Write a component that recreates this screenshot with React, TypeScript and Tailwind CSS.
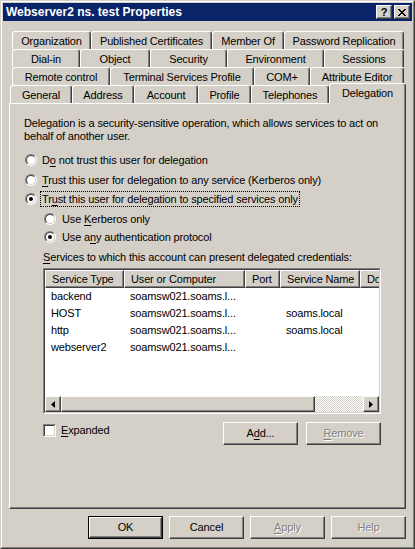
import React from 'react';

const rows: { label: string; w: string }[][] = [
  [
    { label: 'Organization', w: 'w-[79px]' },
    { label: 'Published Certificates', w: 'w-[121px]' },
    { label: 'Member Of', w: 'w-[72px]' },
    { label: 'Password Replication', w: 'w-[120px]' },
  ],
  [
    { label: 'Dial-in', w: 'w-[68px]' },
    { label: 'Object', w: 'w-[70px]' },
    { label: 'Security', w: 'w-[77px]' },
    { label: 'Environment', w: 'w-[97px]' },
    { label: 'Sessions', w: 'w-[80px]' },
  ],
  [
    { label: 'Remote control', w: 'w-[98px]' },
    { label: 'Terminal Services Profile', w: 'w-[144px]' },
    { label: 'COM+', w: 'w-[56px]' },
    { label: 'Attribute Editor', w: 'w-[94px]' },
  ],
];

const front = [
  { label: 'General', w: 'w-[62px]' },
  { label: 'Address', w: 'w-[62px]' },
  { label: 'Account', w: 'w-[64px]' },
  { label: 'Profile', w: 'w-[53px]' },
  { label: 'Telephones', w: 'w-[78px]' },
];

const services = [
  ['backend', 'soamsw021.soams.l...', ''],
  ['HOST', 'soamsw021.soams.l...', 'soams.local'],
  ['http', 'soamsw021.soams.l...', 'soams.local'],
  ['webserver2', 'soamsw021.soams.l...', ''],
];

const raised =
  'border border-t-white border-l-white border-r-[#404040] border-b-[#404040] shadow-[inset_-1px_-1px_0_#808080]';
const tab =
  'h-[18px] flex items-center justify-center pt-[1px] border-t border-l border-r border-t-white border-l-white border-r-[#404040] shadow-[inset_-1px_0_0_#808080] rounded-t-[3px] shrink-0';
const disabled = 'text-[#808080] [text-shadow:1px_1px_0_#ffffff]';

const U = ({ children }: { children: React.ReactNode }) => (
  <span className="underline decoration-1 underline-offset-[2px]">{children}</span>
);

const Radio = ({ checked }: { checked?: boolean }) => (
  <span className="relative block w-[12px] h-[12px] rounded-full border border-t-[#808080] border-l-[#808080] border-r-white border-b-white shrink-0">
    <span className="absolute inset-0 rounded-full border border-t-[#404040] border-l-[#404040] border-r-[#d4d0c8] border-b-[#d4d0c8] bg-white flex items-center justify-center">
      {checked && <span className="block w-[4px] h-[4px] rounded-full bg-black" />}
    </span>
  </span>
);

const Button = ({ children, off, def }: { children: React.ReactNode; off?: boolean; def?: boolean }) =>
  def ? (
    <div className="w-[75px] h-[23px] border border-black shrink-0">
      <div className={`w-full h-full flex items-center justify-center ${raised}`}>{children}</div>
    </div>
  ) : (
    <div className={`w-[75px] h-[23px] flex items-center justify-center shrink-0 ${raised} ${off ? disabled : ''}`}>
      {children}
    </div>
  );

const Arrow = ({ left }: { left?: boolean }) => (
  <div className={`w-[16px] h-[16px] flex items-center justify-center shrink-0 bg-[#d4d0c8] ${raised}`}>
    <svg width="4" height="7" viewBox="0 0 4 7">
      <path d={left ? 'M4 0 L0 3.5 L4 7 Z' : 'M0 0 L4 3.5 L0 7 Z'} fill="#000" />
    </svg>
  </div>
);

export default function App() {
  return (
    <div className="w-[415px] h-[549px] bg-[#d4d0c8] border border-t-[#d4d0c8] border-l-[#d4d0c8] border-r-[#404040] border-b-[#404040] text-[11px] leading-[13px] tracking-[-0.15px] text-black font-['Liberation_Sans',Arial,sans-serif]">
      <div className="w-full h-full border border-t-white border-l-white border-r-[#808080] border-b-[#808080] p-[1px] flex flex-col">
        {/* title bar */}
        <div className="h-[18px] bg-[#0a246a] flex items-center pl-[3px] shrink-0">
          <span className="text-white font-bold text-[12px] tracking-normal flex-1">Webserver2 ns. test Properties</span>
          <div className={`w-[16px] h-[14px] bg-[#d4d0c8] flex items-center justify-center font-bold text-[11px] leading-none ${raised}`}>?</div>
          <div className={`w-[16px] h-[14px] bg-[#d4d0c8] flex items-center justify-center ml-[2px] mr-[2px] ${raised}`}>
            <svg width="8" height="7" viewBox="0 0 8 7">
              <path d="M0 0h2v1h1v1h2v-1h1v-1h2v1h-1v1h-1v1h-1v1h1v1h1v1h1v1h-2v-1h-1v-1h-2v1h-1v1h-2v-1h1v-1h1v-1h1v-1h-1v-1h-1v-1h-1z" fill="#000" />
            </svg>
          </div>
        </div>

        {/* tabs */}
        <div className="mt-[10px] flex flex-col">
          {rows.map((row, i) => (
            <div key={i} className="flex ml-[9px]">
              {row.map((t) => (
                <div key={t.label} className={`${tab} ${t.w}`}>{t.label}</div>
              ))}
            </div>
          ))}
          <div className="flex items-end ml-[7px] h-[18px]">
            {front.map((t) => (
              <div key={t.label} className={`${tab} ${t.w}`}>{t.label}</div>
            ))}
            <div className="relative z-10 w-[77px] h-[21px] -mb-[1px] bg-[#d4d0c8] flex items-center justify-center pb-[2px] border-t border-l border-r border-t-white border-l-white border-r-[#404040] shadow-[inset_-1px_0_0_#808080] rounded-t-[3px] shrink-0">
              Delegation
            </div>
          </div>
        </div>

        {/* panel */}
        <div className="ml-[6px] w-[397px] h-[406px] border border-t-white border-l-white border-r-[#404040] border-b-[#404040] shadow-[inset_-1px_-1px_0_#808080] flex flex-col pl-[14px]">
          <p className="mt-[13px]">
            Delegation is a security-sensitive operation, which allows services to act on
            <br />
            behalf of another user.
          </p>

          <div className="mt-[9px] h-[16px] flex items-center ml-[1px] gap-[5px]">
            <Radio />
            <span>D<U>o</U> not trust this user for delegation</span>
          </div>
          <div className="mt-[4px] h-[16px] flex items-center ml-[1px] gap-[5px]">
            <Radio />
            <span><U>T</U>rust this user for delegation to any service (Kerberos only)</span>
          </div>
          <div className="mt-[3px] h-[16px] flex items-center ml-[1px] gap-[3px]">
            <Radio checked />
            <span className="h-[16px] flex items-center px-[1px] border border-dotted border-black">
              Tr<U>u</U>st this user for delegation to specified services only
            </span>
          </div>
          <div className="mt-[4px] h-[16px] flex items-center ml-[20px] gap-[6px]">
            <Radio />
            <span>Use <U>K</U>erberos only</span>
          </div>
          <div className="mt-[2px] h-[16px] flex items-center ml-[20px] gap-[6px]">
            <Radio checked />
            <span>Use a<U>n</U>y authentication protocol</span>
          </div>

          <div className="mt-[6px] ml-[19px]">
            <U>S</U>ervices to which this account can present delegated credentials:
          </div>

          {/* list view */}
          <div className="mt-[4px] ml-[19px] w-[338px] h-[146px] border border-t-[#808080] border-l-[#808080] border-r-white border-b-white">
            <div className="w-full h-full border border-t-[#404040] border-l-[#404040] border-r-[#d4d0c8] border-b-[#d4d0c8] bg-white flex flex-col overflow-hidden">
              <div className="flex h-[18px] shrink-0 bg-[#d4d0c8]">
                <div className={`w-[79px] shrink-0 flex items-center pl-[6px] ${raised}`}>Service Type</div>
                <div className={`w-[121px] shrink-0 flex items-center pl-[6px] ${raised}`}>User or Computer</div>
                <div className={`w-[35px] shrink-0 flex items-center pl-[6px] ${raised}`}>Port</div>
                <div className={`w-[80px] shrink-0 flex items-center pl-[6px] ${raised}`}>Service Name</div>
                <div className={`w-[80px] shrink-0 flex items-center pl-[6px] ${raised}`}>Domain</div>
              </div>
              {services.map((s) => (
                <div key={s[0]} className="flex h-[17px] items-center shrink-0">
                  <div className="w-[79px] pl-[6px] shrink-0">{s[0]}</div>
                  <div className="w-[121px] pl-[6px] shrink-0">{s[1]}</div>
                  <div className="w-[35px] shrink-0" />
                  <div className="w-[80px] pl-[6px] shrink-0">{s[2]}</div>
                </div>
              ))}
              <div className="mt-auto flex h-[16px] shrink-0">
                <Arrow left />
                <div className={`w-[254px] shrink-0 bg-[#d4d0c8] ${raised}`} />
                <div className="flex-1 [background:repeating-conic-gradient(#d4d0c8_0%_25%,#ffffff_0%_50%)_0_0/2px_2px]" />
                <Arrow />
              </div>
            </div>
          </div>

          <div className="mt-[8px] ml-[19px] w-[338px] flex items-start">
            <div className="mt-[2px] w-[13px] h-[13px] border border-t-[#808080] border-l-[#808080] border-r-white border-b-white shrink-0">
              <div className="w-full h-full border border-t-[#404040] border-l-[#404040] border-r-[#d4d0c8] border-b-[#d4d0c8] bg-white" />
            </div>
            <span className="ml-[5px] mt-[2px] flex-1"><U>E</U>xpanded</span>
            <div className="flex gap-[8px]">
              <Button>A<U>d</U>d...</Button>
              <Button off><U>R</U>emove</Button>
            </div>
          </div>
        </div>

        {/* dialog buttons */}
        <div className="mt-[7px] flex justify-end gap-[6px] pr-[6px]">
          <Button def>OK</Button>
          <Button>Cancel</Button>
          <Button off><U>A</U>pply</Button>
          <Button off>Help</Button>
        </div>
      </div>
    </div>
  );
}
